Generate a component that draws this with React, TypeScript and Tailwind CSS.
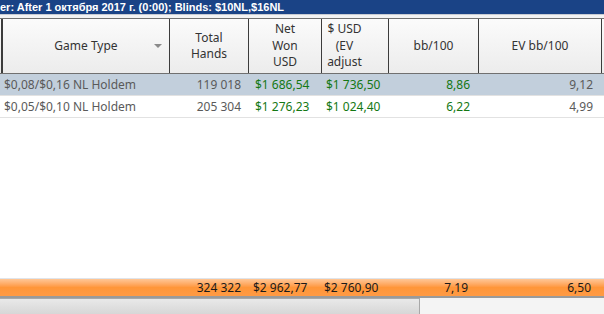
import { ReactNode } from "react";

const COLS = [
  { key: "game", w: "w-[167px]" },
  { key: "hands", w: "w-[79px]" },
  { key: "net", w: "w-[73px]" },
  { key: "ev", w: "w-[67px]" },
  { key: "bb", w: "w-[90px]" },
  { key: "evbb", w: "w-[123px]" },
];

type Row = { game: string; hands: string; net: string; ev: string; bb: string; evbb: string; selected?: boolean };

const ROWS: Row[] = [
  { game: "$0,08/$0,16 NL Holdem", hands: "119 018", net: "$1 686,54", ev: "$1 736,50", bb: "8,86", evbb: "9,12", selected: true },
  { game: "$0,05/$0,10 NL Holdem", hands: "205 304", net: "$1 276,23", ev: "$1 024,40", bb: "6,22", evbb: "4,99" },
];

function HeadCell({ w, children, extra = "" }: { w: string; children: ReactNode; extra?: string }) {
  return (
    <div
      className={`${w} shrink-0 flex items-center justify-center text-center leading-[16.5px] border-r border-[#3c3c3c] ${extra}`}
    >
      {children}
    </div>
  );
}

export default function App() {
  return (
    <div className="w-[604px] h-[314px] overflow-hidden bg-white text-[12px] font-['Noto_Sans',sans-serif] relative">
      {/* filter title bar */}
      <div className="h-[14px] bg-[#1a4386] text-white font-bold text-[11px] leading-[14px] whitespace-nowrap overflow-hidden font-['Liberation_Sans',sans-serif]">
        er: After 1 октября 2017 г. (0:00); Blinds: $10NL,$16NL
      </div>
      <div className="h-[4px] bg-[#f3f3f3] border-t border-[#c8ccd4]" />

      {/* header */}
      <div className="h-[56px] flex border-t border-b border-[#707070] bg-gradient-to-b from-[#fbfbfb] to-[#ececec] text-[#333]">
        <div className="w-[3px] shrink-0 border-r-2 border-[#3c3c3c]" />
        <HeadCell w={COLS[0].w}>
          <div className="relative w-full flex justify-center">
            <span>Game Type</span>
            <span className="absolute right-[7px] top-[6px] w-0 h-0 border-l-[4px] border-r-[4px] border-t-[4px] border-l-transparent border-r-transparent border-t-[#8a8a8a]" />
          </div>
        </HeadCell>
        <HeadCell w={COLS[1].w}>
          <div>Total<br />Hands</div>
        </HeadCell>
        <HeadCell w={COLS[2].w}>
          <div>Net<br />Won<br />USD</div>
        </HeadCell>
        <HeadCell w={COLS[3].w} extra="pr-[21px]">
          <div>$ USD<br />(EV<br />adjust</div>
        </HeadCell>
        <HeadCell w={COLS[4].w}>bb/100</HeadCell>
        <HeadCell w={COLS[5].w}>EV bb/100</HeadCell>
      </div>

      {/* rows */}
      {ROWS.map((r) => (
        <div
          key={r.game}
          className={`h-[22px] flex items-center border-b border-[#e2e2e2] leading-[22px] ${r.selected ? "bg-[#c2cfdc]" : "bg-white"}`}
        >
          <div className="w-[4px] shrink-0" />
          <div className="w-[166px] shrink-0 text-[#5a5a5a] whitespace-nowrap">{r.game}</div>
          <div className="w-[79px] shrink-0 text-right pr-[8px] text-[#5a5a5a]">{r.hands}</div>
          <div className="w-[73px] shrink-0 pl-[6px] text-[#147814] whitespace-nowrap">{r.net}</div>
          <div className="w-[67px] shrink-0 pl-[4px] text-[#147814] whitespace-nowrap">{r.ev}</div>
          <div className="w-[90px] shrink-0 text-right pr-[9px] text-[#147814]">{r.bb}</div>
          <div className="w-[123px] shrink-0 text-right pr-[9px] text-[#5a5a5a]">{r.evbb}</div>
        </div>
      ))}

      <div className="h-[160px]" />

      {/* totals */}
      <div className="h-[18px] flex items-center leading-[18px] text-[#1a1a1a] border-t border-[#e0e4ea] bg-gradient-to-b from-[#ffc796] via-[#ff9638] to-[#ff9a44]">
        <div className="w-[170px] shrink-0" />
        <div className="w-[79px] shrink-0 text-right pr-[8px]">324 322</div>
        <div className="w-[73px] shrink-0 pl-[4px] whitespace-nowrap">$2 962,77</div>
        <div className="w-[67px] shrink-0 pl-[2px] whitespace-nowrap">$2 760,90</div>
        <div className="w-[90px] shrink-0 text-right pr-[11px]">7,19</div>
        <div className="w-[123px] shrink-0 text-right pr-[11px]">6,50</div>
      </div>

      {/* scrollbar */}
      <div className="h-[2px] bg-[#9a9a9a]" />
      <div className="flex h-[18px] bg-[#f4f4f4]">
        <div className="w-[420px] h-full border-r border-t border-[#a8a8a8] bg-gradient-to-b from-[#e9e9e9] to-[#d4d4d4]" />
      </div>
    </div>
  );
}
